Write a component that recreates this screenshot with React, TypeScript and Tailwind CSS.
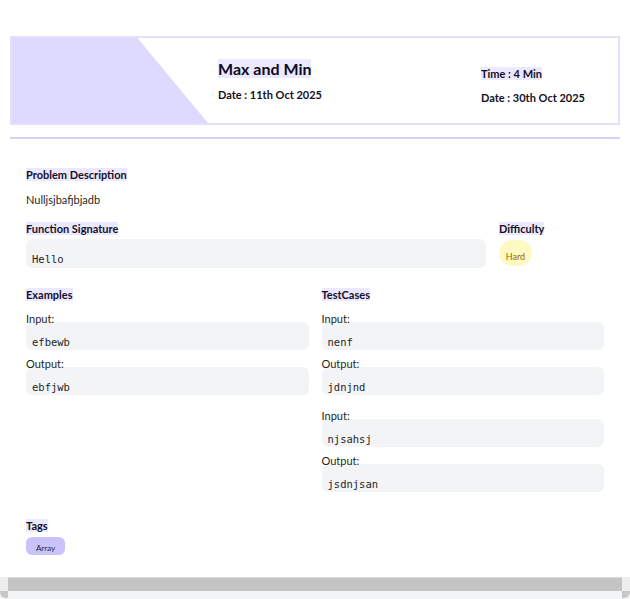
import React from "react";

const font = { fontFamily: "Lato, 'Noto Sans', sans-serif" };

function Heading({ children }: { children: React.ReactNode }) {
  return (
    <div className="h-[14px] leading-[14px] text-[11px] font-bold text-[#14101f]">
      <span className="bg-[#ebe8ff]">{children}</span>
    </div>
  );
}

function CodeBox({ text }: { text: string }) {
  return (
    <div className="-mt-[4px] h-[28px] rounded-md bg-[#f3f4f6] px-[6px] pt-[14px]">
      <pre
        className="m-0 text-[10.5px] leading-[13px] text-[#1f1f1f]"
        style={{ fontFamily: "'DejaVu Sans Mono', monospace" }}
      >
        {text}
      </pre>
    </div>
  );
}

function Pair({ label, text }: { label: string; text: string }) {
  return (
    <div className="flex flex-col">
      <div className="relative z-10 h-[14px] leading-[14px] text-[11px] text-[#1f1f1f]">{label}</div>
      <CodeBox text={text} />
    </div>
  );
}

function IOGroup({ input, output }: { input: string; output: string }) {
  return (
    <div className="flex flex-col gap-[7px]">
      <Pair label="Input:" text={input} />
      <Pair label="Output:" text={output} />
    </div>
  );
}

export default function App() {
  return (
    <div className="relative h-[599px] w-[630px] overflow-hidden bg-white" style={font}>
      <div className="px-[10px] pt-[36px]">
        {/* Header card */}
        <div className="flex h-[89px] border-2 border-[#e3e0fd] bg-white">
          <div className="h-full w-[196px] bg-[#dedaff] [clip-path:polygon(0_0,64%_0,100%_100%,0_100%)]" />
          <div className="flex flex-1 flex-col justify-center pl-[10px]">
            <div className="h-[20px] leading-[20px] text-[16px] font-bold text-[#0f0b1e]">
              <span className="bg-[#ebe8ff]">Max and Min</span>
            </div>
            <div className="mt-[9px] h-[14px] leading-[14px] text-[11px] font-bold text-[#14101f]">
              Date : 11th Oct 2025
            </div>
          </div>
          <div className="flex w-[137px] flex-col pt-[29px]">
            <div className="h-[14px] leading-[14px] text-[11px] font-bold text-[#14101f]">
              <span className="bg-[#ebe8ff]">Time : 4 Min</span>
            </div>
            <div className="mt-[10px] h-[14px] leading-[14px] text-[11px] font-bold text-[#14101f]">
              Date : 30th Oct 2025
            </div>
          </div>
        </div>
        <div className="mt-[12px] h-[2px] bg-[#d6d0fb]" />

        {/* Body */}
        <div className="px-[16px] pt-[29px]">
          <Heading>Problem Description</Heading>
          <div className="mt-[11px] h-[14px] leading-[14px] text-[11px] text-[#1f1f1f]">
            Nulljsjbafjbjadb
          </div>

          <div className="mt-[15px] flex gap-[13px]">
            <div className="flex flex-1 flex-col">
              <Heading>Function Signature</Heading>
              <div className="mt-[3px] h-[29px] rounded-md bg-[#f3f4f6] px-[6px] pt-[14px]">
                <pre
                  className="m-0 text-[10.5px] leading-[13px] text-[#1f1f1f]"
                  style={{ fontFamily: "'DejaVu Sans Mono', monospace" }}
                >
                  Hello
                </pre>
              </div>
            </div>
            <div className="flex w-[105px] flex-col">
              <Heading>Difficulty</Heading>
              <div className="mt-[4px] flex h-[26px] w-[33px] items-end justify-center rounded-full bg-[#fef9c3] pb-[4px] text-[9px] leading-[11px] text-[#a16207]">
                Hard
              </div>
            </div>
          </div>

          <div className="mt-[20px] grid grid-cols-2 gap-[13px]">
            <div className="flex flex-col">
              <Heading>Examples</Heading>
              <div className="mt-[10px]">
                <IOGroup input="efbewb" output="ebfjwb" />
              </div>
            </div>
            <div className="flex flex-col">
              <Heading>TestCases</Heading>
              <div className="mt-[10px] flex flex-col gap-[14px]">
                <IOGroup input="nenf" output="jdnjnd" />
                <IOGroup input="njsahsj" output="jsdnjsan" />
              </div>
            </div>
          </div>

          <div className="mt-[27px]">
            <Heading>Tags</Heading>
            <div className="mt-[4px] flex h-[18px] w-[39px] items-end justify-center rounded-md bg-[#c9c3fb] pb-[2px] text-[8px] leading-[10px] text-[#1f1f1f]">
              Array
            </div>
          </div>
        </div>
      </div>

      {/* horizontal scrollbar */}
      <div className="absolute bottom-0 left-0 flex h-[22px] w-[630px] flex-col bg-[#f3f4f6]">
        <div className="flex h-[14px]">
          <div className="w-[8px] bg-[#eeeeef]" />
          <div className="flex-1 border-t border-[#dcdcdc] bg-[#c4c4c4]" />
          <div className="w-[8px] bg-[#eeeeef]" />
        </div>
        <div className="flex h-[8px] justify-between">
          <div className="h-[7px] w-[8px] rounded-bl-[6px] bg-[#c8c8c8]" />
          <div className="h-[7px] w-[8px] rounded-br-[6px] bg-[#c8c8c8]" />
        </div>
      </div>
    </div>
  );
}
